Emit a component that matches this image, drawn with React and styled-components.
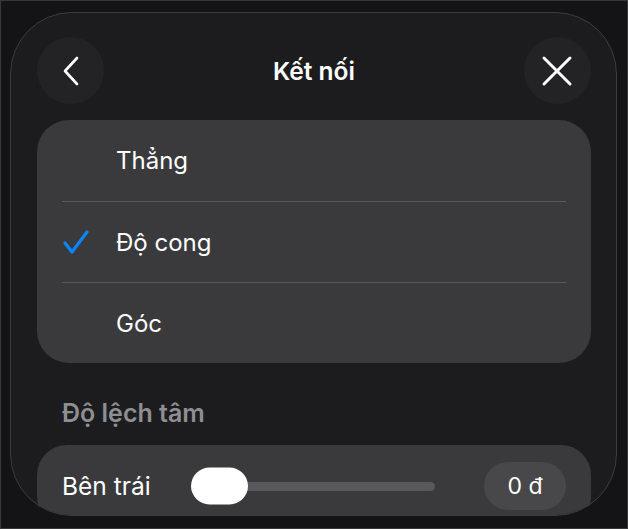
import React from "react";
import styled, { createGlobalStyle } from "styled-components";

const GlobalStyle = createGlobalStyle`
  html, body {
    margin: 0;
    padding: 0;
    background: #141416;
  }
  body {
    font-family: Inter, "Noto Sans", "Liberation Sans", sans-serif;
    -webkit-font-smoothing: antialiased;
  }
`;

const Frame = styled.div`
  width: 628px;
  height: 529px;
  box-sizing: border-box;
  border: 1px solid #38383a;
  background: #141416;
  padding: 11px 0 0 9px;
  overflow: hidden;
`;

const Panel = styled.div`
  width: 607px;
  height: 504px;
  box-sizing: border-box;
  border: 1px solid #3c3c3f;
  border-radius: 62px;
  background: #1c1c1e;
  padding: 24px 25px 0 26px;
  overflow: hidden;
  display: flex;
  flex-direction: column;
`;

const Header = styled.div`
  display: flex;
  align-items: center;
  justify-content: space-between;
  height: 67px;
`;

const RoundButton = styled.div`
  width: 67px;
  height: 67px;
  border-radius: 50%;
  background: #232325;
  display: flex;
  align-items: center;
  justify-content: center;
`;

const Title = styled.div`
  color: #ffffff;
  font-size: 24.5px;
  font-weight: 600;
`;

const Card = styled.div`
  background: #3a3a3c;
  border-radius: ${(p) => p.$radius || 32}px;
  margin-top: ${(p) => p.$top || 0}px;
`;

const OptionRow = styled.div`
  display: flex;
  align-items: center;
  height: 81px;
  margin: 0 25px;
  border-top: ${(p) => (p.$first ? "none" : "1.5px solid #58585c")};
  box-sizing: border-box;
`;

const CheckSlot = styled.div`
  width: 54px;
  display: flex;
  align-items: center;
`;

const OptionLabel = styled.span`
  color: #ffffff;
  font-size: 24px;
  font-weight: 400;
`;

const SectionTitle = styled.div`
  color: #8e8e93;
  font-size: 25px;
  font-weight: 600;
  margin: 36px 0 0 25px;
  height: 28px;
  line-height: 28px;
`;

const SliderRow = styled.div`
  display: flex;
  align-items: center;
  height: 82px;
  padding: 0 25px;
`;

const SliderLabel = styled.span`
  color: #ffffff;
  font-size: 24.5px;
  width: 129px;
  flex-shrink: 0;
`;

const Track = styled.div`
  position: relative;
  width: 244px;
  height: 9px;
  border-radius: 5px;
  background: #59595d;
`;

const Thumb = styled.div`
  position: absolute;
  left: 0;
  top: 50%;
  transform: translateY(-50%);
  width: 57px;
  height: 37px;
  border-radius: 19px;
  background: #ffffff;
`;

const ValuePill = styled.div`
  margin-left: auto;
  width: 82px;
  height: 48px;
  border-radius: 24px;
  background: #48484a;
  color: #ffffff;
  font-size: 23px;
  display: flex;
  align-items: center;
  justify-content: center;
`;

const BackIcon = () => (
  <svg width="20" height="32" viewBox="0 0 20 32">
    <path d="M16 3 L4 16 L16 29" fill="none" stroke="#fff" strokeWidth="2.6" strokeLinecap="round" strokeLinejoin="round" />
  </svg>
);

const CloseIcon = () => (
  <svg width="32" height="32" viewBox="0 0 32 32">
    <path d="M3 3 L29 29 M29 3 L3 29" fill="none" stroke="#fff" strokeWidth="3" strokeLinecap="round" />
  </svg>
);

const CheckIcon = () => (
  <svg width="28" height="26" viewBox="0 0 28 26">
    <path d="M3 14 L10 23 L25 3" fill="none" stroke="#0a84ff" strokeWidth="3.2" strokeLinecap="round" strokeLinejoin="round" />
  </svg>
);

const options = [
  { label: "Thẳng", checked: false },
  { label: "Độ cong", checked: true },
  { label: "Góc", checked: false },
];

export default function App() {
  return (
    <>
      <GlobalStyle />
      <Frame>
        <Panel>
          <Header>
            <RoundButton>
              <BackIcon />
            </RoundButton>
            <Title>Kết nối</Title>
            <RoundButton>
              <CloseIcon />
            </RoundButton>
          </Header>
          <Card $top={16}>
            {options.map((o, i) => (
              <OptionRow key={o.label} $first={i === 0}>
                <CheckSlot>{o.checked && <CheckIcon />}</CheckSlot>
                <OptionLabel>{o.label}</OptionLabel>
              </OptionRow>
            ))}
          </Card>
          <SectionTitle>Độ lệch tâm</SectionTitle>
          <Card $top={18} $radius={30}>
            <SliderRow>
              <SliderLabel>Bên trái</SliderLabel>
              <Track>
                <Thumb />
              </Track>
              <ValuePill>0 đ</ValuePill>
            </SliderRow>
          </Card>
        </Panel>
      </Frame>
    </>
  );
}
